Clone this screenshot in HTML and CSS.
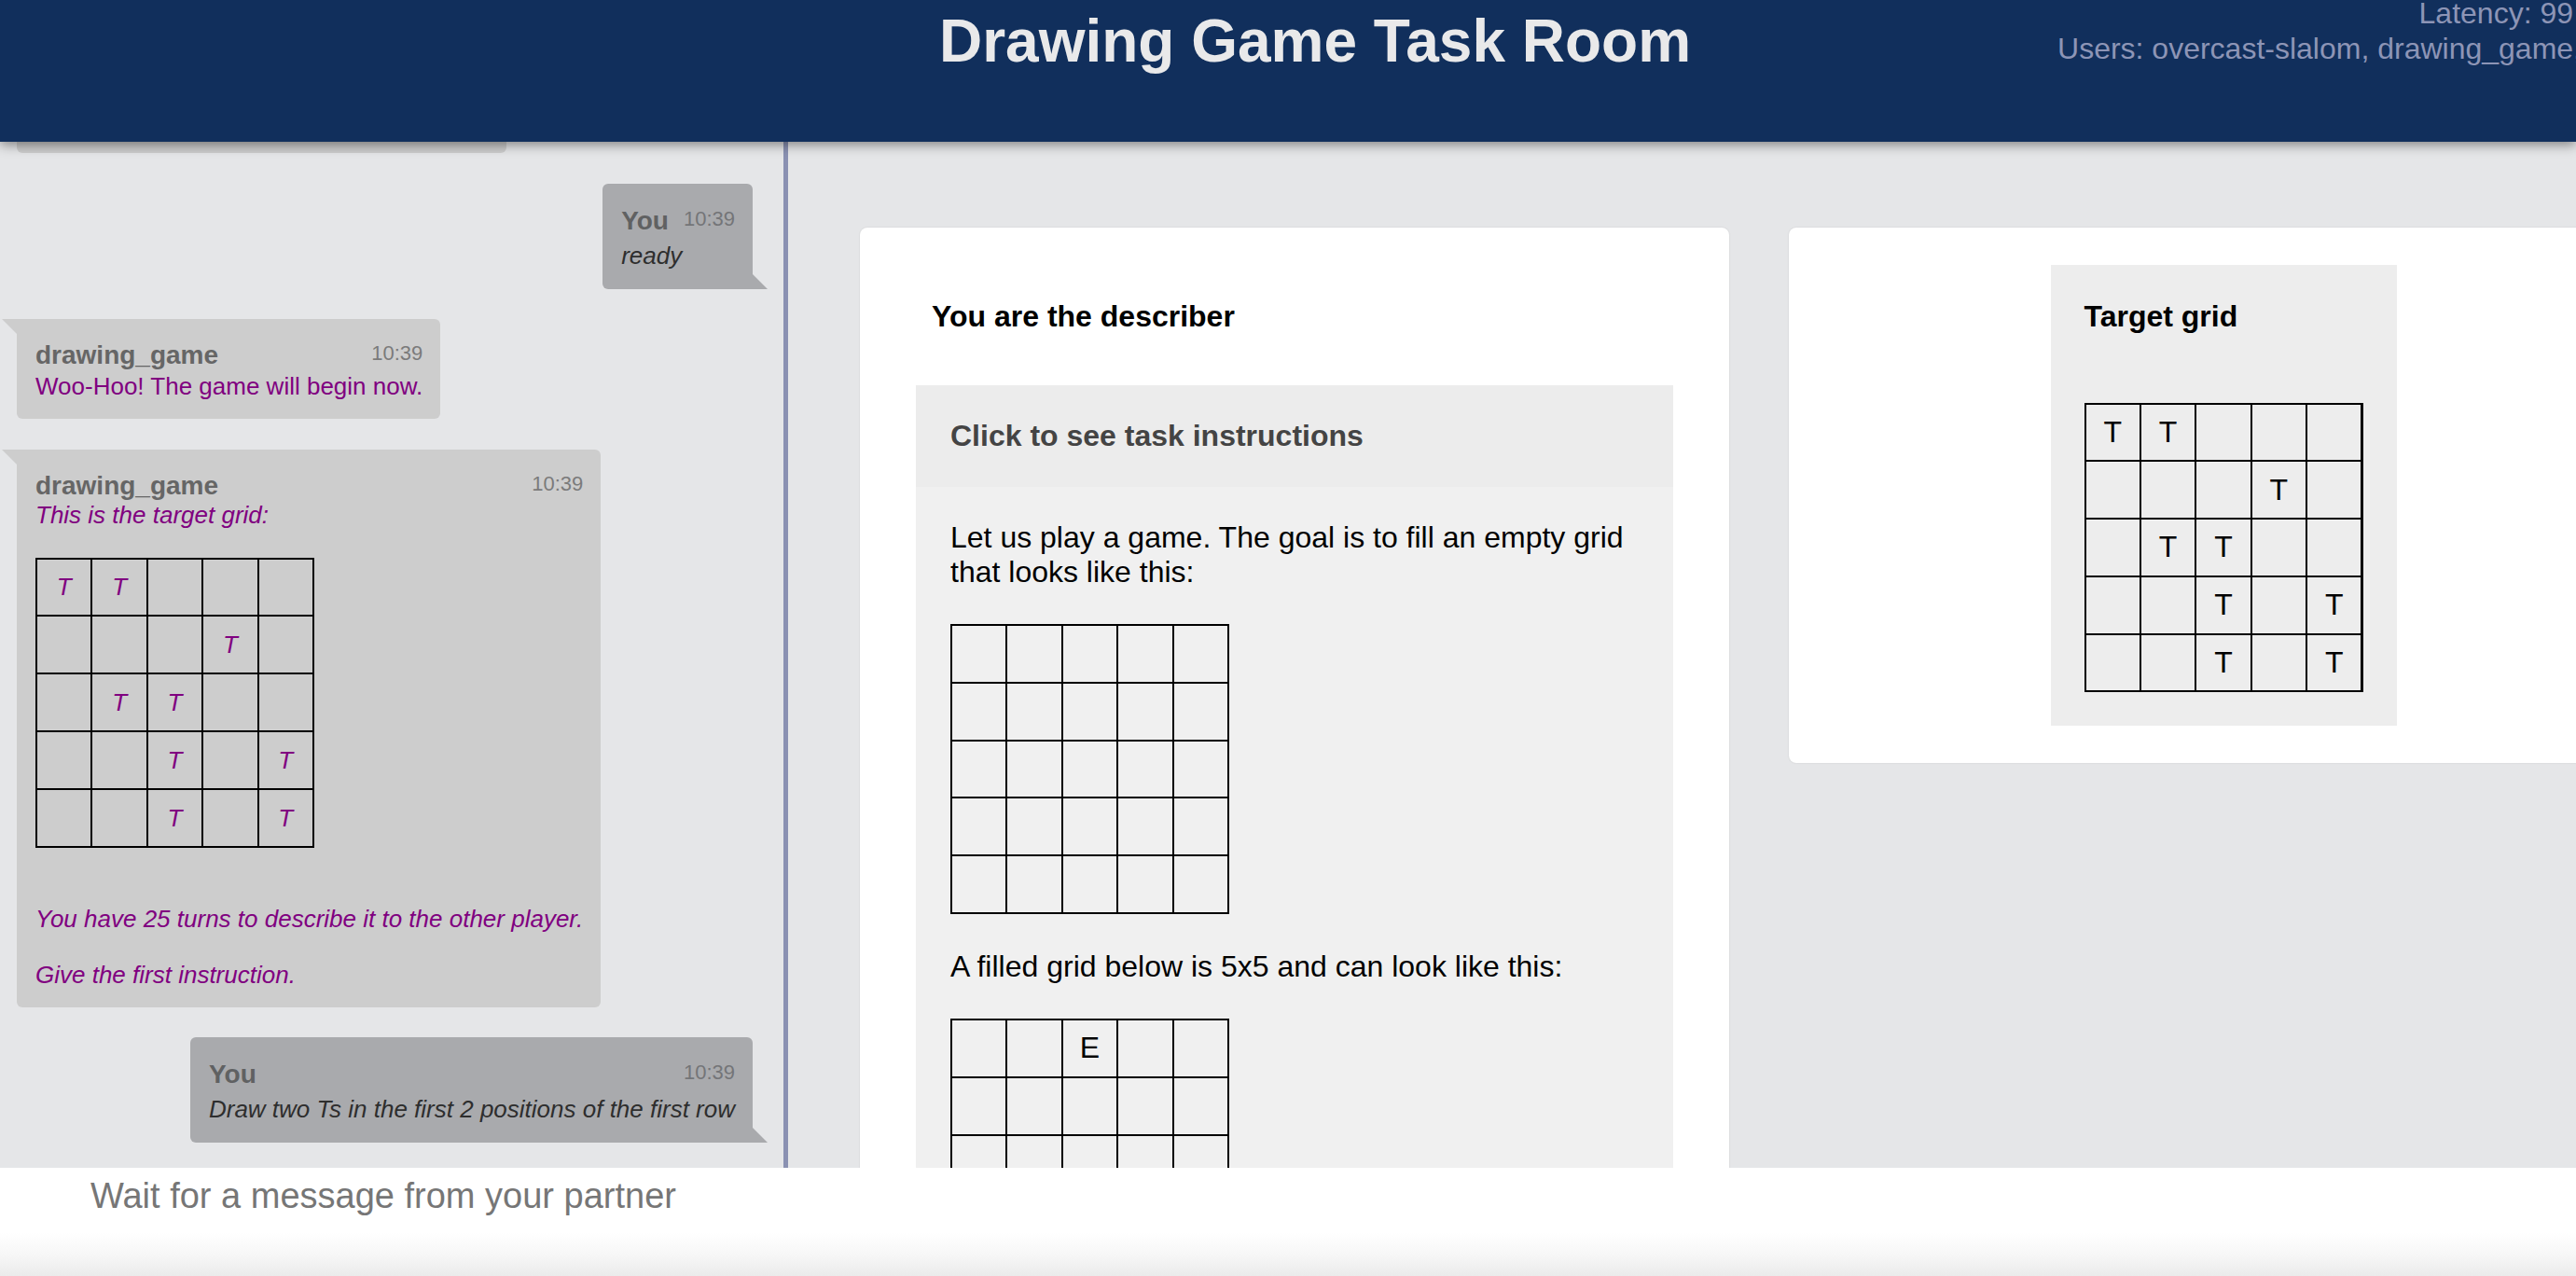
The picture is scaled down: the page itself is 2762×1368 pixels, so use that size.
FILE: index.html
```html
<!DOCTYPE html>
<html lang="en">
<head>
<meta charset="utf-8">
<title>Drawing Game Task Room</title>
<link rel="stylesheet" href="styles.css">
</head>
<body>
<header class="topbar">
  <h1 class="title">Drawing Game Task Room</h1>
  <div class="status">
    <div class="latency">Latency: 99</div>
    <div class="users">Users: overcast-slalom, drawing_game,</div>
  </div>
</header>

<div class="workspace">
  <aside class="chat">
    <div class="log">
      <div class="bubble other partial"></div>

      <div class="bubble own">
        <div class="meta"><span class="time">10:39</span><span class="name">You</span></div>
        <div class="text own-text">ready</div>
      </div>

      <div class="bubble other">
        <div class="meta"><span class="time">10:39</span><span class="name">drawing_game</span></div>
        <div class="text bot-text">Woo-Hoo! The game will begin now.</div>
      </div>

      <div class="bubble other">
        <div class="meta"><span class="time">10:39</span><span class="name">drawing_game</span></div>
        <div class="text bot-text italic">
          <div>This is the target grid:</div>
          <div class="grid chat-grid">
            <div class="cell">T</div><div class="cell">T</div><div class="cell"></div><div class="cell"></div><div class="cell"></div>
            <div class="cell"></div><div class="cell"></div><div class="cell"></div><div class="cell">T</div><div class="cell"></div>
            <div class="cell"></div><div class="cell">T</div><div class="cell">T</div><div class="cell"></div><div class="cell"></div>
            <div class="cell"></div><div class="cell"></div><div class="cell">T</div><div class="cell"></div><div class="cell">T</div>
            <div class="cell"></div><div class="cell"></div><div class="cell">T</div><div class="cell"></div><div class="cell">T</div>
          </div>
          <div>You have 25 turns to describe it to the other player.</div>
          <div class="para">Give the first instruction.</div>
        </div>
      </div>

      <div class="bubble own">
        <div class="meta"><span class="time">10:39</span><span class="name">You</span></div>
        <div class="text own-text">Draw two Ts in the first 2 positions of the first row</div>
      </div>
    </div>
  </aside>

  <main class="stage">
    <section class="card task-card">
      <h2 class="role">You are the describer</h2>
      <div class="instructions">
        <div class="instr-head">Click to see task instructions</div>
        <div class="instr-body">
          <p class="instr-p">Let us play a game. The goal is to fill an empty grid that looks like this:</p>
          <div class="grid doc-grid">
            <div class="cell"></div><div class="cell"></div><div class="cell"></div><div class="cell"></div><div class="cell"></div>
            <div class="cell"></div><div class="cell"></div><div class="cell"></div><div class="cell"></div><div class="cell"></div>
            <div class="cell"></div><div class="cell"></div><div class="cell"></div><div class="cell"></div><div class="cell"></div>
            <div class="cell"></div><div class="cell"></div><div class="cell"></div><div class="cell"></div><div class="cell"></div>
            <div class="cell"></div><div class="cell"></div><div class="cell"></div><div class="cell"></div><div class="cell"></div>
          </div>
          <p class="instr-p gap">A filled grid below is 5x5 and can look like this:</p>
          <div class="grid doc-grid">
            <div class="cell"></div><div class="cell"></div><div class="cell">E</div><div class="cell"></div><div class="cell"></div>
            <div class="cell"></div><div class="cell"></div><div class="cell"></div><div class="cell"></div><div class="cell"></div>
            <div class="cell"></div><div class="cell"></div><div class="cell"></div><div class="cell"></div><div class="cell"></div>
            <div class="cell"></div><div class="cell"></div><div class="cell"></div><div class="cell"></div><div class="cell"></div>
            <div class="cell"></div><div class="cell"></div><div class="cell"></div><div class="cell"></div><div class="cell"></div>
          </div>
        </div>
      </div>
    </section>

    <section class="card target-card">
      <div class="target-box">
        <h3 class="target-title">Target grid</h3>
        <div class="grid target-grid">
          <div class="cell">T</div><div class="cell">T</div><div class="cell"></div><div class="cell"></div><div class="cell"></div>
          <div class="cell"></div><div class="cell"></div><div class="cell"></div><div class="cell">T</div><div class="cell"></div>
          <div class="cell"></div><div class="cell">T</div><div class="cell">T</div><div class="cell"></div><div class="cell"></div>
          <div class="cell"></div><div class="cell"></div><div class="cell">T</div><div class="cell"></div><div class="cell">T</div>
          <div class="cell"></div><div class="cell"></div><div class="cell">T</div><div class="cell"></div><div class="cell">T</div>
        </div>
      </div>
    </section>
  </main>
</div>

<footer class="composer">
  <div class="placeholder">Wait for a message from your partner</div>
</footer>
</body>
</html>
```

FILE: styles.css
```css
* { box-sizing: border-box; }

html, body {
  margin: 0;
  padding: 0;
}

body {
  width: 2762px;
  height: 1368px;
  overflow: hidden;
  font-family: "Liberation Sans", Arial, Helvetica, sans-serif;
  background: #e5e6e8;
  display: flex;
  flex-direction: column;
}

/* ---------- header ---------- */
.topbar {
  position: relative;
  z-index: 5;
  flex: 0 0 152px;
  height: 152px;
  background: #112f5c;
  box-shadow: 0 3px 12px rgba(0, 0, 0, 0.45);
  text-align: center;
  padding: 7px 0 0 58px;
  overflow: hidden;
}

.title {
  margin: 0;
  font-size: 64px;
  line-height: 74px;
  font-weight: bold;
  color: #e9e9ea;
}

.status {
  position: absolute;
  top: -5px;
  right: -6px;
  text-align: right;
  font-size: 32px;
  line-height: 38px;
  color: #8d95b6;
  white-space: nowrap;
}

.latency { padding-right: 9px; }

/* ---------- workspace ---------- */
.workspace {
  flex: 0 0 1100px;
  height: 1100px;
  display: flex;
  overflow: hidden;
}

.chat {
  flex: 0 0 845px;
  width: 845px;
  height: 1100px;
  border-right: 5px solid #8a91b2;
  background: #e5e6e8;
  overflow: hidden;
}

.log {
  height: 1100px;
  display: flex;
  flex-direction: column;
  justify-content: flex-end;
  gap: 32.5px;
  padding-bottom: 27px;
}

.bubble {
  position: relative;
  flex: 0 0 auto;
  border-radius: 6px;
}

.bubble.other {
  align-self: flex-start;
  margin-left: 18px;
  background: #cdcdcd;
  padding: 23px 19px 20px 20px;
  border-top-left-radius: 0;
}

.bubble.other::before {
  content: "";
  position: absolute;
  left: -16px;
  top: 0;
  width: 0;
  height: 0;
  border-top: 16px solid #cdcdcd;
  border-left: 16px solid transparent;
}

.bubble.own {
  align-self: flex-end;
  margin-right: 33px;
  background: #a9aaad;
  padding: 24px 19px 21px 20px;
  border-bottom-right-radius: 0;
}

.bubble.own::after {
  content: "";
  position: absolute;
  right: -16px;
  bottom: 0;
  width: 0;
  height: 0;
  border-bottom: 16px solid #a9aaad;
  border-right: 16px solid transparent;
}

.bubble.partial {
  width: 525px;
  height: 140px;
}

.meta {
  font-size: 28px;
  line-height: 32px;
  height: 32px;
}

.name {
  font-size: 28px;
  font-weight: bold;
  color: #666666;
}

.bubble.own .name { color: #606162; }

.time {
  float: right;
  margin-left: 16px;
  margin-top: 1px;
  font-size: 22px;
  line-height: 25px;
  color: #7b7b7b;
}

.bubble.own .time { color: #747578; }

.text {
  font-size: 26px;
  line-height: 30px;
  white-space: nowrap;
}

.own-text {
  margin-top: 6px;
  color: #2e2e2e;
  font-style: italic;
}

.bot-text {
  margin-top: 2px;
  color: #800080;
}

.bubble.other .bot-text.italic { margin-top: 0; }

.italic { font-style: italic; }

.para { margin-top: 30px; }

/* ---------- grids ---------- */
.grid {
  display: grid;
  grid-template-columns: repeat(5, 57.4px);
  grid-auto-rows: 59.8px;
  gap: 2px;
  padding: 2px;
  background: #000000;
  width: 299px;
}

.cell {
  display: flex;
  align-items: center;
  justify-content: center;
}

.chat-grid {
  margin: 31px 0 61px;
}

.chat-grid .cell {
  background: #cdcdcd;
  font-size: 26px;
  color: #800080;
  font-style: italic;
}

.doc-grid {
  margin-top: 37px;
}

.doc-grid .cell {
  background: #f0f0f0;
  font-size: 32px;
  color: #000;
}

.target-grid .cell {
  background: #ededed;
  font-size: 32px;
  color: #000;
}

/* ---------- stage / cards ---------- */
.stage {
  flex: 1 1 auto;
  display: flex;
  align-items: flex-start;
  gap: 64px;
  padding: 92px 0 0 77px;
  overflow: hidden;
  background: #e5e6e8;
}

.card {
  flex: 0 0 932px;
  width: 932px;
  background: #ffffff;
  border-radius: 8px;
  box-shadow: 0 0 2px rgba(0, 0, 0, 0.12);
}

.task-card {
  padding: 77px 60px 60px;
}

.role {
  margin: 0 0 55px;
  padding-left: 17px;
  font-size: 32px;
  line-height: 37px;
  font-weight: bold;
  color: #000;
}

.instructions {
  background: #f0f0f0;
}

.instr-head {
  background: #ececec;
  padding: 36px 37px 36px;
  font-size: 32px;
  line-height: 37px;
  font-weight: bold;
  color: #444444;
}

.instr-body {
  padding: 36px 37px 40px;
}

.instr-p {
  margin: 0;
  font-size: 32px;
  line-height: 37px;
  color: #000;
}

.instr-p.gap { margin-top: 38px; }

.target-card {
  padding: 40px;
  display: flex;
  justify-content: center;
}

.target-box {
  background: #ededed;
  padding: 37px 36px 36px;
}

.target-title {
  margin: 0 0 73.5px;
  font-size: 32px;
  line-height: 37px;
  font-weight: bold;
  color: #000;
}

/* ---------- composer ---------- */
.composer {
  flex: 0 0 116px;
  height: 116px;
  background: linear-gradient(to bottom, #ffffff 0%, #ffffff 60%, #f7f7f7 80%, #ebebeb 100%);
  padding: 8px 0 0 97px;
}

.placeholder {
  font-size: 38px;
  line-height: 44px;
  color: #767676;
}
```
